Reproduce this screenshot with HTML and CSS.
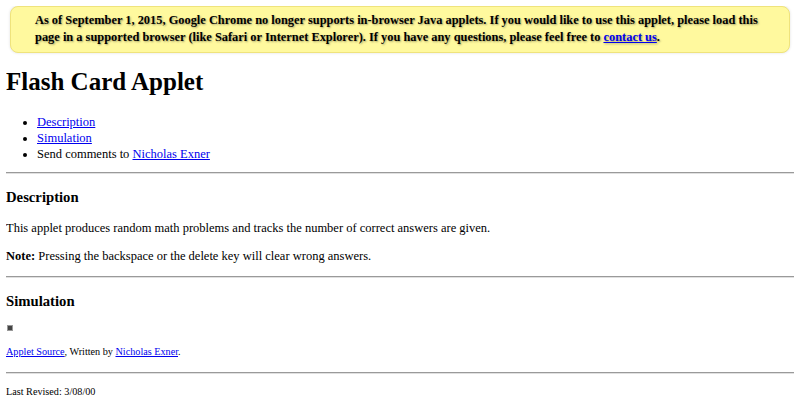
FILE: index.html
```html
<!DOCTYPE html>
<html lang="en">
<head>
<meta charset="UTF-8">
<title>Flash Card Applet</title>
<link rel="stylesheet" href="styles.css">
</head>
<body>
<div class="java-notice">As of September 1, 2015, Google Chrome no longer supports in-browser Java applets. If you would like to use this applet, please load this page in a supported browser (like Safari or Internet Explorer). If you have any questions, please feel free to <a href="#">contact us</a>.</div>
<h1>Flash Card Applet</h1>
<ul class="toc">
  <li><a href="#description">Description</a></li>
  <li><a href="#simulation">Simulation</a></li>
  <li>Send comments to <a href="#">Nicholas Exner</a></li>
</ul>
<hr>
<h3 id="description">Description</h3>
<p>This applet produces random math problems and tracks the number of correct answers are given.</p>
<p class="note"><b>Note:</b> Pressing the backspace or the delete key will clear wrong answers.</p>
<hr>
<h3 id="simulation">Simulation</h3>
<div class="applet"></div>
<p class="small"><a href="#">Applet Source</a>, Written by <a href="#">Nicholas Exner</a>.</p>
<hr>
<p class="small revised">Last Revised: 3/08/00</p>
</body>
</html>
```

FILE: styles.css
```css
body{margin:6px;font-family:"Liberation Serif","Times New Roman",serif;font-size:12.5px;color:#000;background:#fff;}
a{color:#0000ee;}
.java-notice{margin:0 4px;padding:5px 14px 6px 24px;background:#fff99e;border:1px solid #efe37c;border-radius:8px;box-shadow:0 0 3px rgba(0,0,0,0.12);font-size:12.4px;font-weight:bold;line-height:17px;text-shadow:1px 1px 2px rgba(0,0,0,0.35);}
h1{font-size:25px;margin:15px 0 18px;}
.toc{margin:0 0 2px;padding-left:31px;line-height:16px;}
hr{margin:10px 0;border:0;border-top:1px solid #9a9a9a;border-bottom:1px solid #e0e0e0;}
h3{font-size:14.7px;margin:15px 0;}
p{margin:13px 0;}
.note{margin-bottom:12px;}
.applet{width:4px;height:4px;background:#444;border:1px solid #999;margin:0 0 0 1px;}
.small{font-size:10.2px;margin:15px 0;}
.revised{margin-top:12px;}
```
